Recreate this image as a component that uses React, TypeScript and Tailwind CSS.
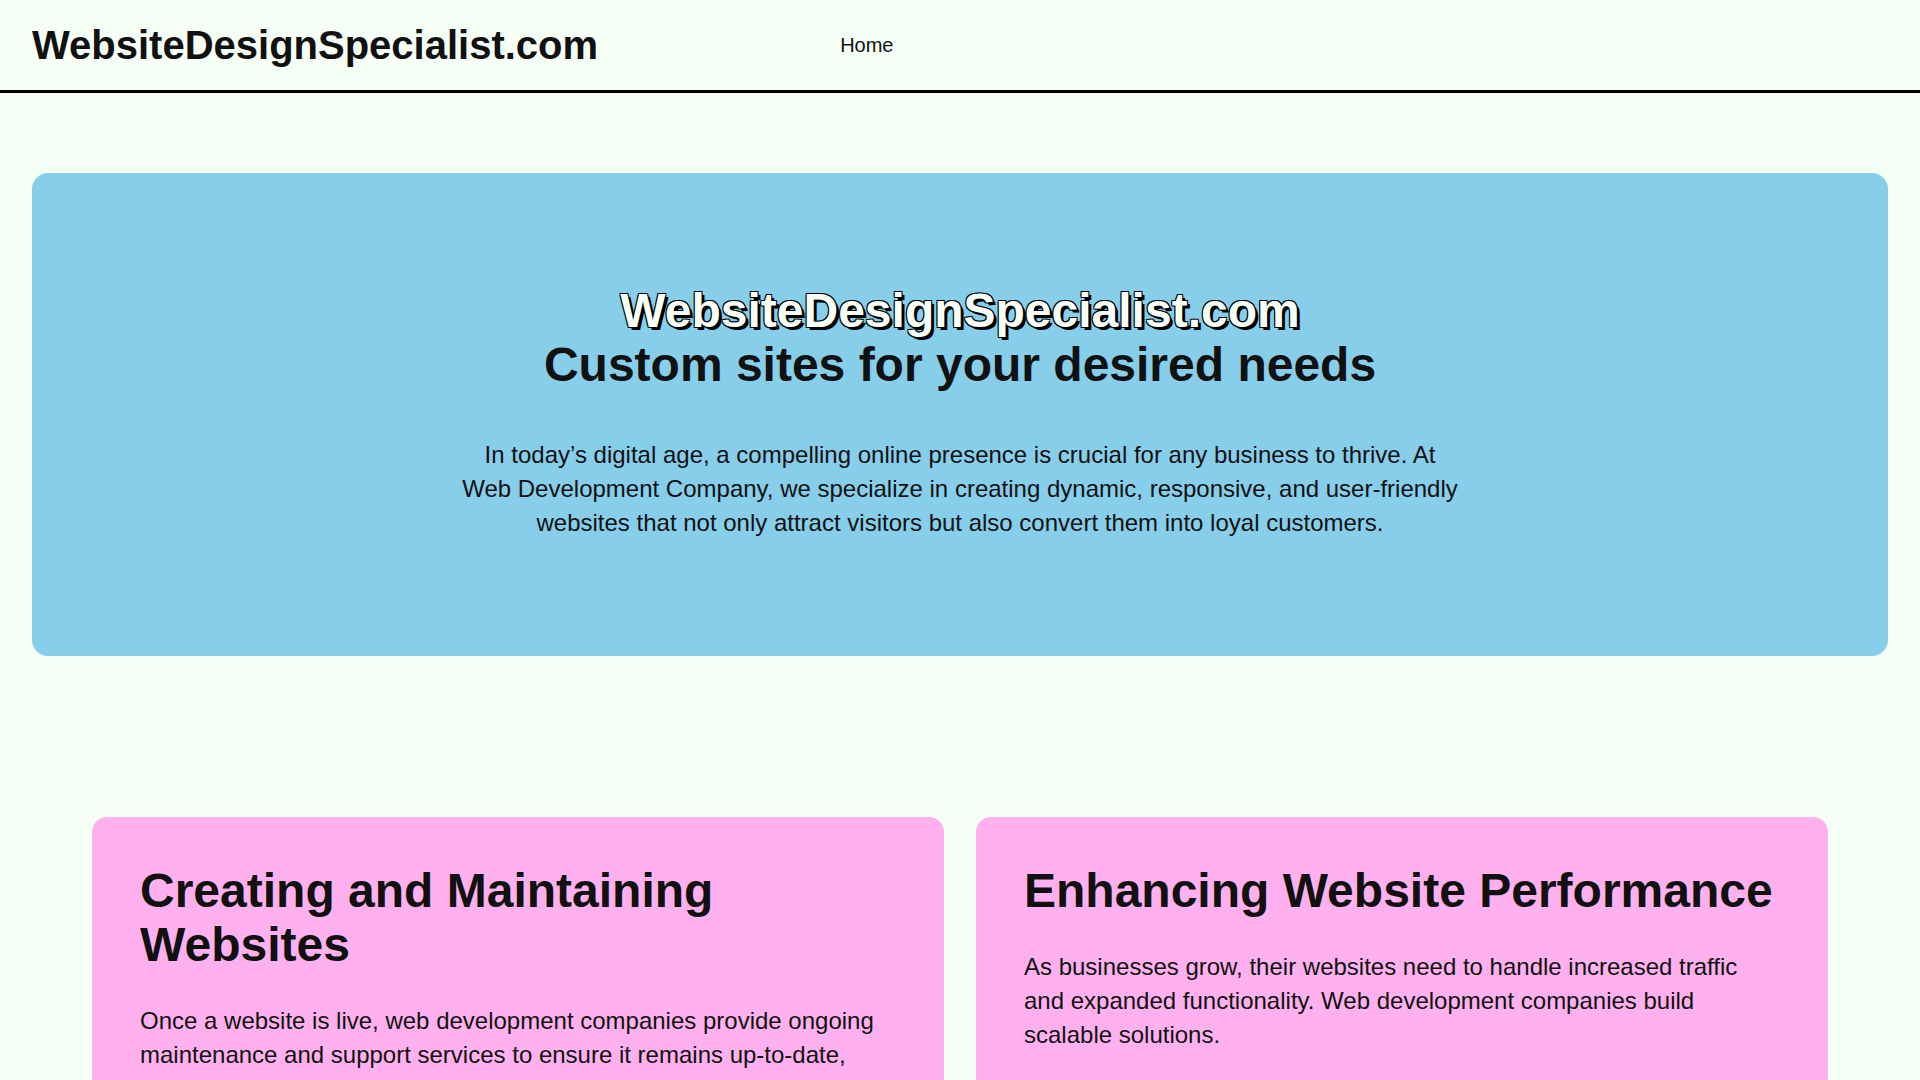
export default function App() {
  const cards = [
    {
      title: "Creating and Maintaining Websites",
      body: "Once a website is live, web development companies provide ongoing maintenance and support services to ensure it remains up-to-date, secure, and functional.",
    },
    {
      title: "Enhancing Website Performance",
      body: "As businesses grow, their websites need to handle increased traffic and expanded functionality. Web development companies build scalable solutions.",
    },
  ];

  return (
    <div className="min-h-screen bg-[#f5fff5] pb-16 font-['Liberation_Sans',Arial,sans-serif] text-[#111]">
      <header className="flex h-[93px] items-center border-b-[3px] border-black px-8">
        <h1 className="text-[40px] font-bold leading-[1.15]">WebsiteDesignSpecialist.com</h1>
        <nav className="ml-[242px]">
          <a href="#" className="text-[20px]">
            Home
          </a>
        </nav>
      </header>

      <section className="mx-8 mt-20 h-[483px] rounded-2xl bg-[#87ceeb] pt-[111px] text-center">
        <h2 className="text-[48px] font-bold leading-[1.12]">
          <span className="block text-[#f8fff8] [text-shadow:-1px_-1px_0_#000,1px_-1px_0_#000,-1px_1px_0_#000,1px_1px_0_#000,3px_3px_0_#000]">
            WebsiteDesignSpecialist.com
          </span>
          <span className="block">Custom sites for your desired needs</span>
        </h2>
        <p className="mx-auto mt-[46px] max-w-[1000px] text-[24px] leading-[1.42]">
          In today’s digital age, a compelling online presence is crucial for any business to
          thrive. At Web Development Company, we specialize in creating dynamic, responsive, and
          user-friendly websites that not only attract visitors but also convert them into loyal
          customers.
        </p>
      </section>

      <section className="mt-[161px] grid grid-cols-2 gap-[32px] px-[92px]">
        {cards.map((c) => (
          <article key={c.title} className="rounded-[15px] bg-[#ffb1ef] px-12 pt-[47px] pb-12">
            <h3 className="text-[48px] font-bold leading-[1.12]">{c.title}</h3>
            <p className="mt-8 text-[24px] leading-[1.42]">{c.body}</p>
          </article>
        ))}
      </section>
    </div>
  );
}
